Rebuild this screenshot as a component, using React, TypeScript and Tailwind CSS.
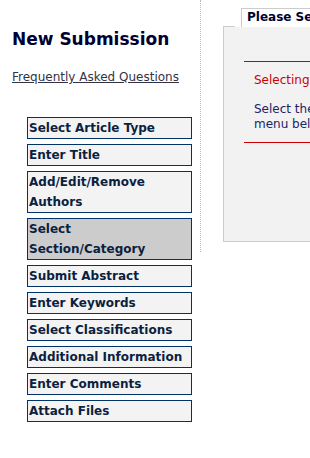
const steps = [
  { label: 'Select Article Type' },
  { label: 'Enter Title' },
  { label: 'Add/Edit/Remove Authors' },
  { label: 'Select Section/Category', active: true },
  { label: 'Submit Abstract' },
  { label: 'Enter Keywords' },
  { label: 'Select Classifications' },
  { label: 'Additional Information' },
  { label: 'Enter Comments' },
  { label: 'Attach Files' },
];

function StepButton({ label, active }: { label: string; active?: boolean }) {
  return (
    <div
      className={`w-[165px] border border-[#003366] pl-px text-[12px] leading-[20px] font-bold text-[#0b1f3f] ${
        active ? 'bg-[#cccccc]' : 'bg-[#f3f3f3]'
      }`}
    >
      {label}
    </div>
  );
}

export default function App() {
  return (
    <div className="w-[310px] h-[458px] overflow-hidden bg-white font-['DejaVu_Sans',sans-serif]">
      <div className="flex items-start">
        <div className="w-[200px] shrink-0 pl-[12px]">
          <h1 className="pt-[29px] text-[17px] leading-[20px] font-bold text-[#000033]">New Submission</h1>
          <a href="#" className="mt-[21px] block text-[12px] leading-[14px] text-[#333344] underline">
            Frequently Asked Questions
          </a>
          <div className="mt-[33px] ml-[15px] flex flex-col gap-[5px]">
            {steps.map((s) => (
              <StepButton key={s.label} label={s.label} active={s.active} />
            ))}
          </div>
        </div>

        <div className="h-[252px] shrink-0 border-l border-dotted border-[#bbbbbb] pl-[22px] pt-[8px]">
          <div className="relative w-[420px]">
            <div className="relative z-10 ml-[18px] -mb-px h-[19px] w-[300px] border border-b-0 border-[#cccccc] bg-white pl-[5px] text-[12px] leading-[16px] font-bold text-[#000033] whitespace-nowrap">
              Please Select an Article Type
            </div>
            <div className="relative h-[216px] border border-[#cccccc] bg-[#f2f2f2]">
              <span className="absolute -top-px left-[11px] h-px w-[7px] bg-white" />
              <div className="ml-[20px] mt-[34px] border-t border-[#cc0000]">
                <div className="mt-[11px] pl-[10px] text-[12px] leading-[14px] text-[#cc0000] whitespace-nowrap">
                  Selecting an Article Type
                </div>
                <div className="mt-[15px] pl-[10px] text-[12px] leading-[15px] text-[#222266] whitespace-nowrap">
                  Select the article type of your submission from the drop-down
                  <br />
                  menu below.
                </div>
                <div className="mt-[10px] border-t border-[#cc0000]" />
              </div>
            </div>
          </div>
        </div>
      </div>
    </div>
  );
}
